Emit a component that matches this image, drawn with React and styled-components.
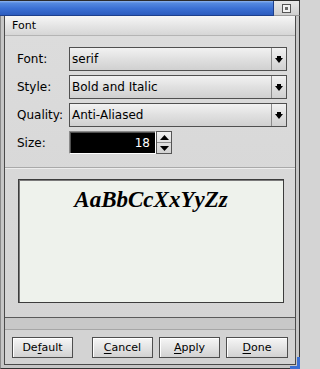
import { Fragment } from "react";
import styled, { createGlobalStyle } from "styled-components";

const GlobalStyle = createGlobalStyle`
  html, body {
    margin: 0;
    padding: 0;
    background: #d4d4d4;
  }
  * {
    box-sizing: border-box;
  }
`;

const ui = `"DejaVu Sans", "Liberation Sans", sans-serif`;

const Window = styled.div`
  position: relative;
  width: 300px;
  height: 369px;
  display: flex;
  flex-direction: column;
  font-family: ${ui};
  color: #000;
  background: #c9c9c9;
`;

const TitleBar = styled.div`
  height: 16px;
  display: flex;
  border-top: 1px solid #2b2b2b;
`;

const TitleFill = styled.div`
  flex: 1;
  background: linear-gradient(#8fb4ee 0, #5489e0 15%, #3a6fd3 55%, #2c5cbf 100%);
  border-right: 1px solid #1d3f8c;
  border-bottom: 1px solid #1d3f8c;
`;

const TitleButtons = styled.div`
  width: 26px;
  display: flex;
  align-items: center;
  justify-content: center;
  background: linear-gradient(#e8e8e8, #cfcfcf);
  border-right: 1px solid #3a3a3a;
  border-bottom: 1px solid #9a9a9a;
`;

const CloseBox = styled.div`
  width: 9px;
  height: 9px;
  border: 1px solid #555;
  background: #f2f2f2;
  display: flex;
  align-items: center;
  justify-content: center;
  &::after {
    content: "";
    width: 3px;
    height: 3px;
    background: #6a6a6a;
  }
`;

const Frame = styled.div`
  flex: 1;
  display: flex;
  border: 1px solid #333;
  border-top: none;
  border-left-color: #8a8a8a;
  padding: 0 3px 3px 3px;
  background: #c6c6c6;
`;

const Body = styled.div`
  flex: 1;
  display: flex;
  flex-direction: column;
  border: 1px solid #4a4a4a;
  border-top: none;
  background: #d3d3d3;
`;

const TabHeader = styled.div`
  height: 20px;
  padding-left: 7px;
  display: flex;
  align-items: center;
  font-size: 11px;
  background: linear-gradient(#f6f6f6, #e2e2e2 60%, #d6d6d6);
  border-bottom: 1px solid #b4b4b4;
`;

const TabPanel = styled.div`
  display: flex;
  flex-direction: column;
  background: linear-gradient(#dcdcdc, #d4d4d4);
  border-bottom: 1px solid #5a5a5a;
`;

const FormGrid = styled.div`
  display: grid;
  grid-template-columns: 52px 1fr;
  grid-auto-rows: 24px;
  row-gap: 4px;
  padding: 11px 8px 0 12px;
`;

const Label = styled.div`
  font-size: 12px;
  display: flex;
  align-items: center;
`;

const Combo = styled.div`
  display: flex;
  border: 1px solid #505050;
  background: linear-gradient(#f2f2f2, #e0e0e0 50%, #d0d0d0);
`;

const ComboText = styled.div`
  flex: 1;
  font-size: 12px;
  padding-left: 2px;
  display: flex;
  align-items: center;
`;

const ComboArrow = styled.div`
  width: 15px;
  border-left: 1px solid #8c8c8c;
  display: flex;
  align-items: center;
  justify-content: center;
`;

const SpinRow = styled.div`
  display: flex;
  height: 23px;
`;

const SpinField = styled.div`
  width: 87px;
  background: #000;
  color: #fff;
  font-size: 12px;
  border: 1px solid #8a8a8a;
  border-right-color: #fff;
  border-bottom-color: #fff;
  box-shadow: inset 1px 1px 0 #505050;
  display: flex;
  align-items: center;
  justify-content: flex-end;
  padding-right: 5px;
`;

const SpinButtons = styled.div`
  width: 16px;
  display: flex;
  flex-direction: column;
  border: 1px solid #555;
  background: linear-gradient(#f0f0f0, #d2d2d2);
`;

const SpinHalf = styled.div`
  flex: 1;
  display: flex;
  align-items: center;
  justify-content: center;
  & + & {
    border-top: 1px solid #8c8c8c;
  }
`;

const Separator = styled.div`
  margin-top: 12px;
  height: 2px;
  border-top: 1px solid #a9a9a9;
  border-bottom: 1px solid #ececec;
`;

const PreviewWrap = styled.div`
  padding: 10px 11px 14px 13px;
`;

const Preview = styled.div`
  height: 124px;
  background: #eef2ec;
  border: 1px solid #3c3c3c;
  box-shadow: inset 1px 1px 0 #7a7a7a;
  padding-top: 6px;
  text-align: center;
  font-family: "Liberation Serif", "Times New Roman", serif;
  font-weight: bold;
  font-style: italic;
  font-size: 23px;
  line-height: 28px;
`;

const Strip = styled.div`
  height: 12px;
  background: #c8c8c8;
  border-bottom: 1px solid #a6a6a6;
`;

const ButtonBar = styled.div`
  flex: 1;
  display: flex;
  gap: 6px;
  padding: 7px 7px 0 7px;
  background: #d3d3d3;
`;

const Spacer = styled.div`
  flex: 1;
`;

const Button = styled.button`
  width: ${(p) => p.$w || 61}px;
  height: 21px;
  margin: 0;
  padding: 0;
  font-family: ${ui};
  font-size: 11px;
  color: #000;
  border: 1px solid #4e4e4e;
  background: linear-gradient(#f6f6f6, #e4e4e4 50%, #d2d2d2);
  box-shadow: inset 1px 1px 0 #fff;
  u {
    text-decoration: underline;
    text-underline-offset: 2px;
  }
`;

const ResizeCorner = styled.div`
  position: absolute;
  right: 0;
  bottom: 0;
  width: 10px;
  height: 12px;
  border-right: 3px solid #3a6fd3;
  border-bottom: 3px solid #3a6fd3;
`;

const DownArrow = () => (
  <svg width="8" height="7" viewBox="0 0 8 7">
    <rect x="2" y="0" width="4" height="2" fill="#000" />
    <polygon points="0,2 8,2 4,7" fill="#000" />
  </svg>
);

const Tri = ({ up }) => (
  <svg width="9" height="5" viewBox="0 0 9 5">
    <polygon points={up ? "0,5 9,5 4.5,0" : "0,0 9,0 4.5,5"} fill="#000" />
  </svg>
);

const combos = [
  { label: "Font:", value: "serif" },
  { label: "Style:", value: "Bold and Italic" },
  { label: "Quality:", value: "Anti-Aliased" },
];

export default function App() {
  return (
    <>
      <GlobalStyle />
      <Window>
        <TitleBar>
          <TitleFill />
          <TitleButtons>
            <CloseBox />
          </TitleButtons>
        </TitleBar>
        <Frame>
          <Body>
            <TabHeader>Font</TabHeader>
            <TabPanel>
              <FormGrid>
                {combos.map((c) => (
                  <Fragment key={c.label}>
                    <Label>{c.label}</Label>
                    <Combo>
                      <ComboText>{c.value}</ComboText>
                      <ComboArrow>
                        <DownArrow />
                      </ComboArrow>
                    </Combo>
                  </Fragment>
                ))}
                <Label>Size:</Label>
                <SpinRow>
                  <SpinField>18</SpinField>
                  <SpinButtons>
                    <SpinHalf>
                      <Tri up />
                    </SpinHalf>
                    <SpinHalf>
                      <Tri />
                    </SpinHalf>
                  </SpinButtons>
                </SpinRow>
              </FormGrid>
              <Separator />
              <PreviewWrap>
                <Preview>AaBbCcXxYyZz</Preview>
              </PreviewWrap>
            </TabPanel>
            <Strip />
            <ButtonBar>
              <Button>
                De<u>f</u>ault
              </Button>
              <Spacer />
              <Button>
                <u>C</u>ancel
              </Button>
              <Button>
                <u>A</u>pply
              </Button>
              <Button $w={62}>
                <u>D</u>one
              </Button>
            </ButtonBar>
          </Body>
        </Frame>
        <ResizeCorner />
      </Window>
    </>
  );
}
